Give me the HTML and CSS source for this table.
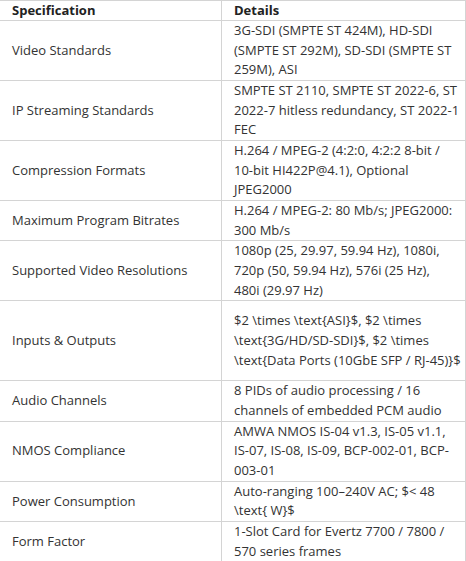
FILE: index.html
```html
<!DOCTYPE html>
<html lang="en">
<head>
    <meta charset="UTF-8">
    <title>Specifications</title>
    <link rel="stylesheet" href="styles.css">
</head>
<body>
    <table class="spec">
        <thead>
            <tr>
                <th class="spec_name">Specification</th>
                <th class="spec_value">Details</th>
            </tr>
        </thead>
        <tbody>
            <tr>
                <td>Video Standards</td>
                <td>3G-SDI (SMPTE ST 424M), HD-SDI (SMPTE ST 292M), SD-SDI (SMPTE ST 259M), ASI</td>
            </tr>
            <tr>
                <td>IP Streaming Standards</td>
                <td>SMPTE ST 2110, SMPTE ST 2022-6, ST 2022-7 hitless redundancy, ST 2022-1 FEC</td>
            </tr>
            <tr>
                <td>Compression Formats</td>
                <td>H.264 / MPEG-2 (4:2:0, 4:2:2 8-bit /<br>10-bit HI422P@4.1), Optional<br>JPEG2000</td>
            </tr>
            <tr>
                <td>Maximum Program Bitrates</td>
                <td>H.264 / MPEG-2: 80 Mb/s; JPEG2000: 300 Mb/s</td>
            </tr>
            <tr>
                <td>Supported Video Resolutions</td>
                <td>1080p (25, 29.97, 59.94 Hz), 1080i, 720p (50, 59.94 Hz), 576i (25 Hz),<br>480i (29.97 Hz)</td>
            </tr>
            <tr>
                <td>Inputs &amp; Outputs</td>
                <td class="spec_pad">$2 \times \text{ASI}$, $2 \times \text{3G/HD/SD-SDI}$, $2 \times \text{Data Ports (10GbE SFP / RJ-45)}$</td>
            </tr>
            <tr>
                <td>Audio Channels</td>
                <td>8 PIDs of audio processing / 16 channels of embedded PCM audio</td>
            </tr>
            <tr>
                <td>NMOS Compliance</td>
                <td>AMWA NMOS IS-04 v1.3, IS-05 v1.1, IS-07, IS-08, IS-09, BCP-002-01, BCP-003-01</td>
            </tr>
            <tr>
                <td>Power Consumption</td>
                <td>Auto-ranging 100–240V AC; $&lt; 48 \text{ W}$</td>
            </tr>
            <tr>
                <td>Form Factor</td>
                <td>1-Slot Card for Evertz 7700 / 7800 / 570 series frames</td>
            </tr>
        </tbody>
    </table>
</body>
</html>
```

FILE: styles.css
```css
*{
    margin: 0;
    padding: 0;
    box-sizing: border-box;
}
body{
    background: #fff;
    font-family: "Open Sans", "Noto Sans", sans-serif;
    font-size: 13px;
    color: #333;
}
.spec{
    width: 467px;
    margin-left: -1px;
    border-collapse: collapse;
    table-layout: fixed;
}
.spec th,
.spec td{
    border: 1px solid #d4d4d4;
    padding: 0 2px 0 12px;
    line-height: 19.67px;
    text-align: left;
    vertical-align: middle;
}
.spec th{
    line-height: 19px;
    font-weight: bold;
    color: #222;
}
.spec_name{
    width: 222px;
}
.spec td.spec_pad{
    padding-top: 10px;
    padding-bottom: 10px;
}
```
